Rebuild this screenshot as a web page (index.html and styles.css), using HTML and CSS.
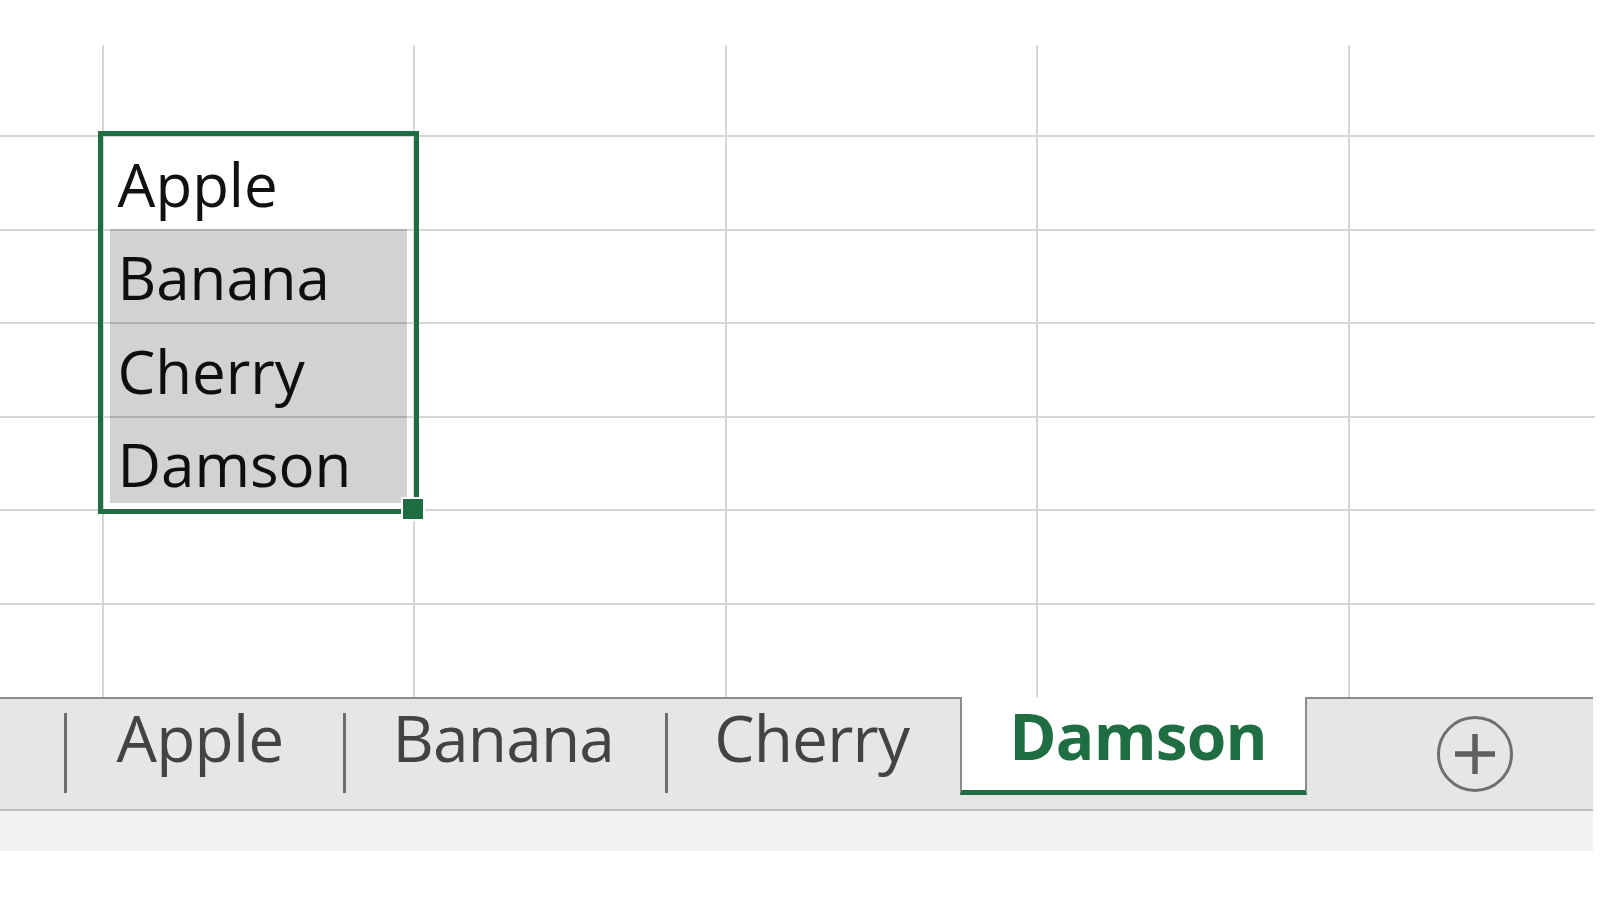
FILE: index.html
```html
<!DOCTYPE html>
<html lang="en">
<head>
<meta charset="utf-8">
<title>Sheet tabs</title>
<link rel="stylesheet" href="styles.css">
</head>
<body>
<div class="app">
  <div class="sheet">
    <div class="grid">
      <div class="cell"></div><div class="cell"></div><div class="cell"></div><div class="cell"></div><div class="cell"></div><div class="cell"></div>
      <div class="cell"></div><div class="cell txt">Apple</div><div class="cell"></div><div class="cell"></div><div class="cell"></div><div class="cell"></div>
      <div class="cell"></div><div class="cell txt">Banana</div><div class="cell"></div><div class="cell"></div><div class="cell"></div><div class="cell"></div>
      <div class="cell"></div><div class="cell txt">Cherry</div><div class="cell"></div><div class="cell"></div><div class="cell"></div><div class="cell"></div>
      <div class="cell"></div><div class="cell txt">Damson</div><div class="cell"></div><div class="cell"></div><div class="cell"></div><div class="cell"></div>
      <div class="cell"></div><div class="cell"></div><div class="cell"></div><div class="cell"></div><div class="cell"></div><div class="cell"></div>
      <div class="cell last"></div><div class="cell last"></div><div class="cell last"></div><div class="cell last"></div><div class="cell last"></div><div class="cell last"></div>
    </div>
    <div class="selection">
      <div class="sel-active"></div>
      <div class="sel-range"></div>
      <div class="fill-handle"></div>
    </div>
  </div>
  <div class="tabbar">
    <div class="tab partial"></div>
    <span class="sep"></span>
    <div class="tab first">Apple</div>
    <span class="sep"></span>
    <div class="tab">Banana</div>
    <span class="sep"></span>
    <div class="tab">Cherry</div>
    <div class="tab active">Damson</div>
    <div class="add">
      <svg width="80" height="80" viewBox="0 0 80 80" aria-hidden="true">
        <circle cx="40" cy="40" r="36.5" fill="none" stroke="#6f6f6f" stroke-width="3"/>
        <path d="M20 40 H60 M40 20 V60" stroke="#606060" stroke-width="5.5" fill="none"/>
      </svg>
    </div>
  </div>
  <div class="status"></div>
</div>
</body>
</html>
```
FILE: styles.css
```css
html, body {
  margin: 0;
  padding: 0;
  background: #ffffff;
}

body {
  width: 1600px;
  height: 900px;
  overflow: hidden;
}

.app {
  width: 1595px;
}

.sheet {
  position: relative;
  padding-top: 45px;
}

.grid {
  display: grid;
  grid-template-columns: 103.5px repeat(4, 311.5px) 1fr;
  grid-template-rows: 92px repeat(5, 93.5px) 92px;
  width: 1595px;
}

.cell {
  box-sizing: border-box;
  border-right: 2px solid #d6d6d6;
  border-bottom: 2px solid #d6d6d6;
}

.cell:nth-child(6n) {
  border-right: none;
}

.cell.last {
  border-bottom: none;
}

.cell.txt {
  display: flex;
  align-items: flex-end;
  padding: 0 0 15px 14px;
  font-family: "Open Sans", Lato, sans-serif;
  font-size: 60px;
  line-height: 1;
  color: #111111;
}

.selection {
  position: absolute;
  left: 98px;
  top: 131px;
  width: 311px;
  height: 373px;
  border: 5px solid #1e6e42;
  display: flex;
  flex-direction: column;
  pointer-events: none;
}

.sel-active {
  height: 93px;
  flex: none;
}

.sel-range {
  flex: 1;
  margin: 0 7px 6px 7px;
  background: #d2d2d2;
  mix-blend-mode: multiply;
}

.fill-handle {
  position: absolute;
  left: 298px;
  top: 361px;
  width: 20px;
  height: 20px;
  background: #1e6e42;
  border: 2px solid #ffffff;
}

.tabbar {
  width: 1593px;
  height: 114px;
  box-sizing: border-box;
  border-top: 2px solid #8c8c8c;
  border-bottom: 2px solid #bdbdbd;
  background: #e6e6e6;
  display: flex;
  align-items: flex-start;
  font-family: "Open Sans", Lato, sans-serif;
  font-size: 64px;
  line-height: 1;
  letter-spacing: -0.8px;
  color: #434343;
}

.tab {
  padding: 7px 51px 0 46px;
  white-space: nowrap;
}

.tab.first {
  padding: 7px 60px 0 50px;
}

.tab.partial {
  width: 63.5px;
  padding: 0;
  box-sizing: border-box;
}

.sep {
  flex: none;
  width: 3px;
  height: 80px;
  margin-top: 14px;
  background: #6e6e6e;
}

.tab.active {
  margin-top: -2px;
  height: 98px;
  padding: 7px 38px 0 47px;
  box-sizing: border-box;
  background: #ffffff;
  border-left: 2px solid #8c8c8c;
  border-right: 2px solid #8c8c8c;
  border-bottom: 5px solid #1e6e42;
  font-weight: 700;
  color: #1e6e42;
}

.add {
  margin-left: 128px;
  margin-top: 15px;
  width: 80px;
  height: 80px;
}

.add svg {
  display: block;
}

.status {
  width: 1593px;
  height: 40px;
  background: #f3f2f1;
}
```
